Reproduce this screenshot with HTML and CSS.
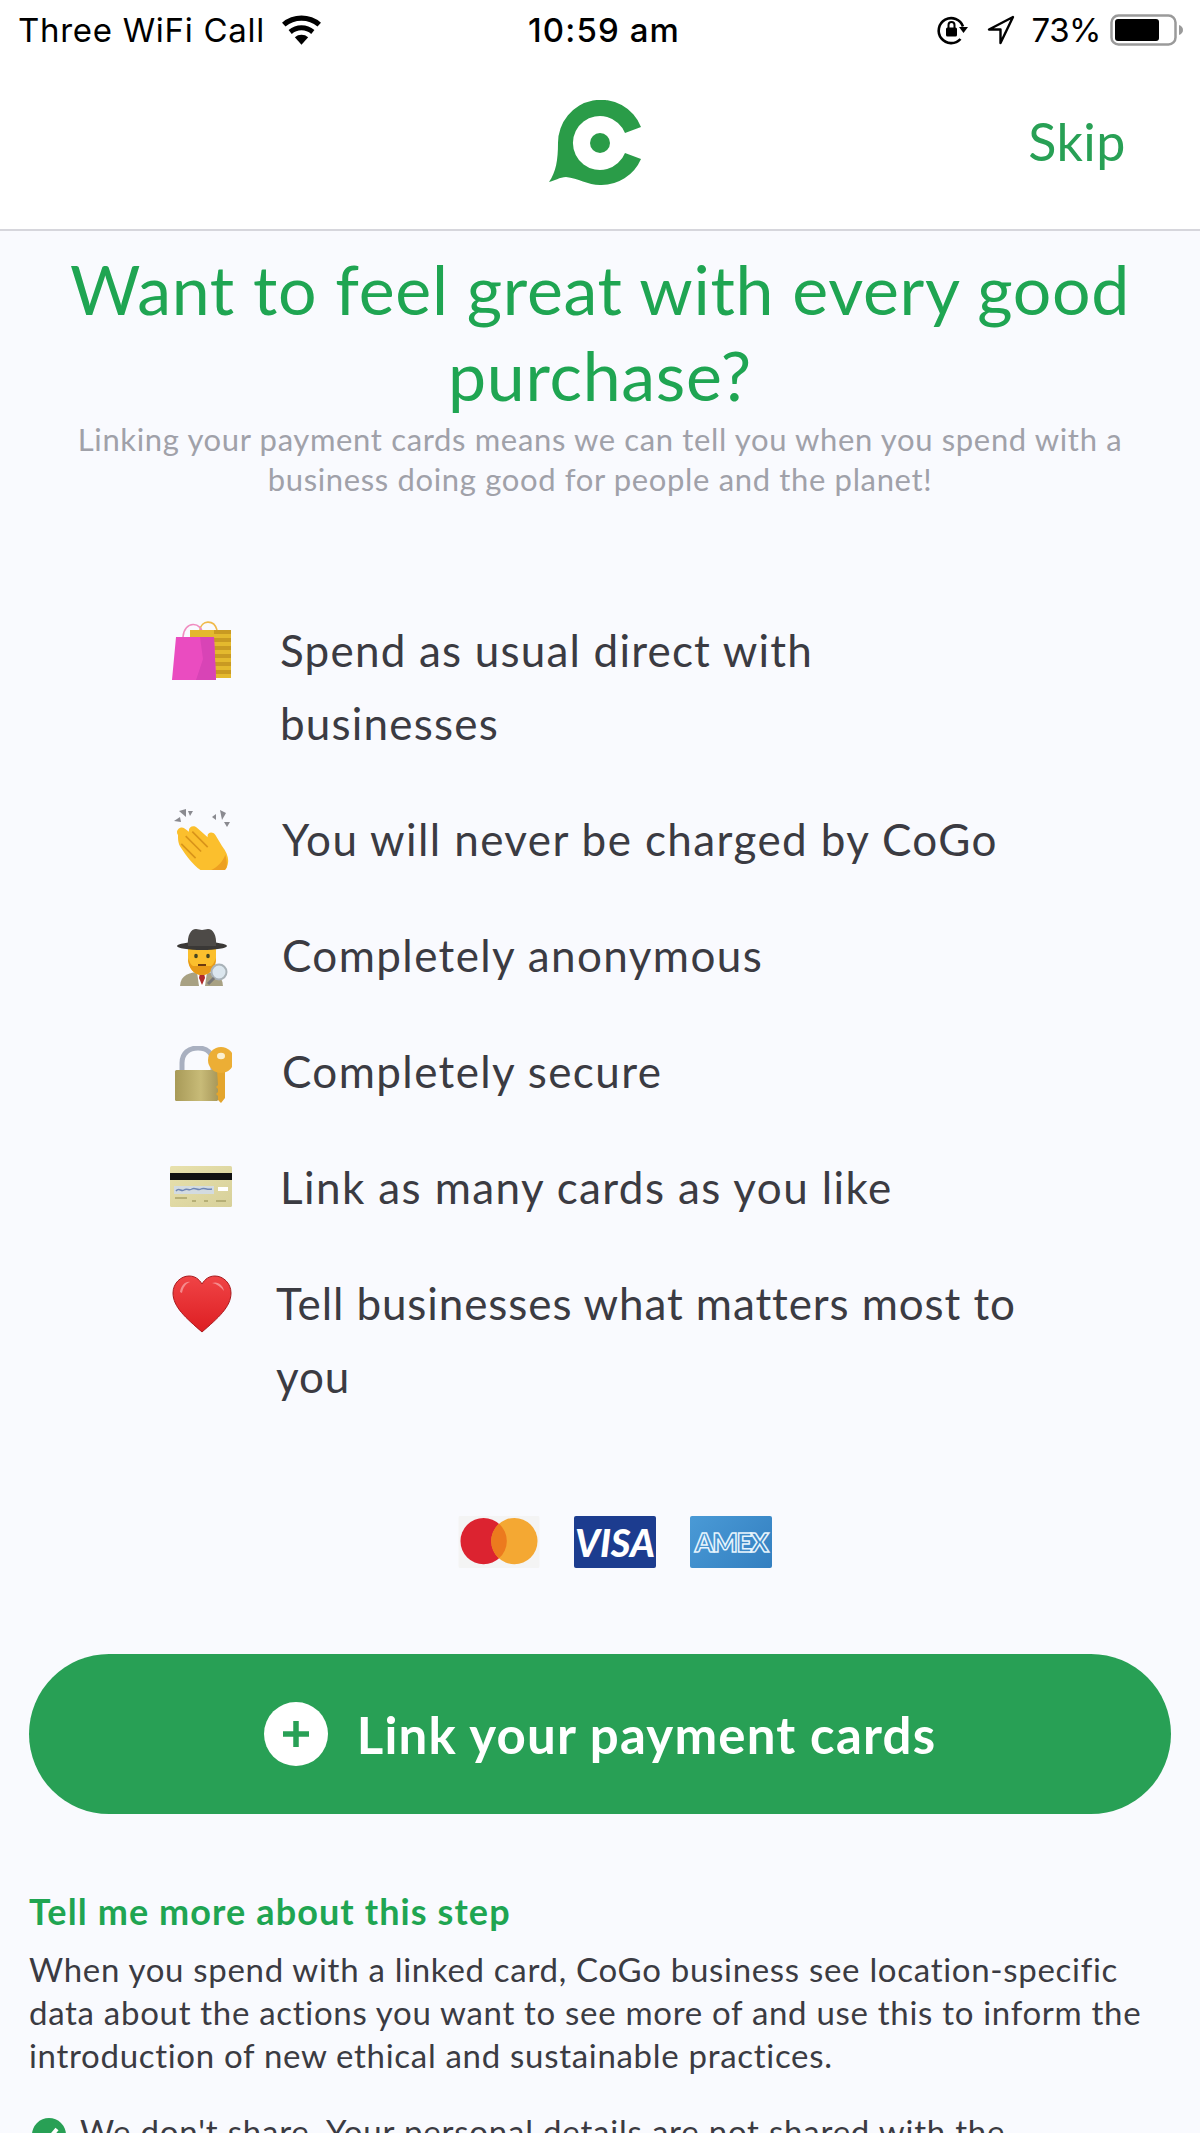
FILE: index.html
```html
<!DOCTYPE html>
<html lang="en">
<head>
<meta charset="utf-8">
<title>CoGo</title>
<link rel="stylesheet" href="styles.css">
</head>
<body>
<div class="page">
  <header class="top">
    <div class="status">
      <div class="status-left">
        <span>Three WiFi Call</span>
        <svg class="wifi" viewBox="0 0 40 30"><path d="M20 29 13.500 21.500a10 10 0 0 1 13 0Z"/><path d="M10.500 18.300 7.400 14.600a19.500 19.500 0 0 1 25.200 0l-3.100 3.700a14.600 14.600 0 0 0-19 0Z"/><path d="M4.400 11.200 1 7.400a29 29 0 0 1 38 0l-3.400 3.800a24 24 0 0 0-31.200 0Z"/></svg>
      </div>
      <div class="status-time">10:59 am</div>
      <div class="status-right">
        <svg class="rot" viewBox="0 0 32 32"><path d="M27 12.500A12.500 12.500 0 1 0 24.500 25" fill="none" stroke="#000" stroke-width="2.600"/><path d="M23 13h9l-4.500 6Z"/><rect x="10" y="13.500" width="11" height="9" rx="1.500"/><path d="M12.500 14v-3a3 3 0 0 1 6 0v3" fill="none" stroke="#000" stroke-width="2"/></svg>
        <svg class="loc" viewBox="0 0 28 30"><path d="M26 2 2 14.500h11.500V28Z" fill="none" stroke="#000" stroke-width="2.400" stroke-linejoin="round"/></svg>
        <span class="pct">73%</span>
        <svg class="batt" viewBox="0 0 74 32"><rect x="1.500" y="1.500" width="64" height="29" rx="7" fill="none" stroke="#9a9a9a" stroke-width="2.500"/><rect x="5" y="5" width="44" height="22" rx="3"/><path d="M69 11c2.500.8 4 2.700 4 5s-1.500 4.200-4 5Z" fill="#9a9a9a"/></svg>
      </div>
    </div>
    <div class="nav">
      <svg class="logo" viewBox="0 0 94 86"><path fill="#2a9c48" d="M1 82C8 72 10 60 10 43A43 43 0 0 1 93 27L77 33A27 27 0 1 0 77 53L93 59A43 43 0 0 1 52 85C40 85 30 78 18 77 12 77 6 81 1 82Z"/><circle cx="52" cy="43" r="10" fill="#2a9c48"/></svg>
      <span class="skip">Skip</span>
    </div>
  </header>

  <main class="content">
    <h1 class="title">Want to feel great with every good purchase?</h1>
    <p class="lead">Linking your payment cards means we can tell you when you spend with a business doing good for people and the planet!</p>

    <ul class="perks">
      <li class="perk">
        <svg class="emoji" viewBox="0 0 60 60"><path d="M28 9C29-1 42-2 45 9" fill="none" stroke="#f0b94a" stroke-width="1.600"/><path d="M11 16C12 0 30-1 31 15" fill="none" stroke="#f08cc0" stroke-width="1.600"/><rect x="18" y="9" width="41" height="48" fill="#e4b92e"/><path d="M42 9h17v4H42zm0 8h17v4H42zm0 8h17v4H42zm0 8h17v4H42zm0 8h17v4H42zm0 8h17v4H42z" fill="#c99a22"/><path d="M4 16H42L44 59H0Z" fill="#ea4cc0"/><path d="M28 16H42L44 59H24L31 38Z" fill="#d844b6"/></svg>
        <span class="perk-text">Spend as usual direct with businesses</span>
      </li>
      <li class="perk perk-b">
        <svg class="emoji emoji-clap" viewBox="0 0 60 62"><g fill="#8a8a90"><path d="M2 13 8 9 9 14Z"/><path d="M7 3 14 1 14 9Z"/><path d="M16 3 21 3 18 8Z"/><path d="M40 9 44 6 44 12Z"/><path d="M48 2 54 5 50 12Z"/><path d="M52 14 58 14 55 19Z"/></g><g transform="translate(-5 5) scale(1.100)"><path d="M10 20C7 16 12 11 16 14L20 17C19 13 24 10 28 14L37 22C36 18 41 16 44 20L50 30C56 38 57 44 54 50 49 58 41 58 34 54 26 50 18 40 13 32 10 28 10 24 10 20Z" fill="#fbbf2d"/><path d="M17 21 31 35M23 17 37 31M13 28 26 41" stroke="#d9941a" stroke-width="1.500" fill="none"/><path d="M34 54C42 58 50 56 54 50 55 46 54 42 53 38 50 46 43 52 34 54Z" fill="#eda021"/></g></svg>
        <span class="perk-text">You will never be charged by CoGo</span>
      </li>
      <li class="perk perk-b">
        <svg class="emoji" viewBox="0 0 60 60"><path d="M8 61C8 49 17 46 30 46s21 3 21 15Z" fill="#a8a183"/><path d="M25 46h10l-2 14h-6Z" fill="#fff"/><path d="M28 47h4l1 5-3 7-3-7Z" fill="#b02a2a"/><path d="M16 22h28v10c0 10-6 17-14 17S16 42 16 32Z" fill="#fbbf2d"/><path d="M16 32c2 4 2 6 5 8h18c3-2 3-4 5-8 0 10-6 17-14 17S16 42 16 32Z" fill="#e79a18"/><ellipse cx="24" cy="30" rx="1.800" ry="2.200" fill="#442"/><ellipse cx="36" cy="30" rx="1.800" ry="2.200" fill="#442"/><path d="M26 39h8" stroke="#6b3a10" stroke-width="2"/><ellipse cx="30" cy="20" rx="25" ry="4" fill="#3a3836"/><path d="M16 20C15 9 19 3 24 3c2 0 4 1 6 1s4-1 6-1c5 0 9 6 8 17Z" fill="#4d4a47"/><circle cx="47" cy="46" r="7.500" fill="#dbe6ee" stroke="#a9b2b8" stroke-width="2"/><path d="M42 52 36 58" stroke="#777" stroke-width="3"/></svg>
        <span class="perk-text">Completely anonymous</span>
      </li>
      <li class="perk perk-b">
        <svg class="emoji emoji-lock" viewBox="-3 0 60 60"><defs><linearGradient id="metal" x1="0" x2="1" y1="0" y2="0"><stop offset="0" stop-color="#a89a58"/><stop offset=".6" stop-color="#c8bb78"/><stop offset="1" stop-color="#a8985a"/></linearGradient></defs><path d="M7 26V17C7 7 14 2 23 2s15 5 15 15v9" fill="none" stroke="#a9b0c0" stroke-width="5"/><rect x="0" y="24" width="43" height="31" rx="1.500" fill="url(#metal)"/><path d="M42 24h8v28l-4 5-3-3v-4l-2-2 2-2v-3l-2-2 2-2Z" fill="#e4a52d"/><circle cx="46" cy="14" r="13" fill="#ecae35"/><ellipse cx="46" cy="10" rx="4" ry="3.200" fill="#fbf0cf"/></svg>
        <span class="perk-text">Completely secure</span>
      </li>
      <li class="perk perk-b">
        <svg class="emoji emoji-wide" viewBox="0 0 62 41"><defs><linearGradient id="cardbg" x1="0" x2="1" y1="0" y2="1"><stop offset="0" stop-color="#e8e1ad"/><stop offset="1" stop-color="#d7d09a"/></linearGradient></defs><rect width="62" height="41" rx="1.500" fill="url(#cardbg)"/><rect y="7" width="62" height="7" fill="#111"/><rect x="4" y="20" width="40" height="8" fill="#d3dbe0"/><path d="M6 25c3-4 5 1 8-1s5 1 8-1 6 2 9 0 5 1 11 0" stroke="#6f86b5" stroke-width="1.500" fill="none"/><rect x="48" y="21" width="10" height="4" fill="#fff"/><path d="M5 32h12M22 35h4M34 35h4M46 35h10" stroke="#a9a26a" stroke-width="1.500"/></svg>
        <span class="perk-text">Link as many cards as you like</span>
      </li>
      <li class="perk perk-c">
        <svg class="emoji" viewBox="0 0 60 58"><defs><linearGradient id="heart" x1="0" x2="0" y1="0" y2="1"><stop offset="0" stop-color="#f04446"/><stop offset="1" stop-color="#dd1e22"/></linearGradient></defs><path d="M30 57C14 43 1 32 1 18 1 8 9 1 17 1c6 0 10 3 13 8 3-5 7-8 13-8 8 0 16 7 16 17 0 14-13 25-29 39Z" fill="url(#heart)" stroke="#a81a1e" stroke-width="1"/><path d="M8 17C9 10 14 6 18 7c-5 2-7 6-8 11ZM40 8c6-2 11 2 12 8-3-4-7-7-12-8Z" fill="#f58a8c"/></svg>
        <span class="perk-text">Tell businesses what matters most to you</span>
      </li>
    </ul>

    <div class="cards">
      <svg class="card card-mc" viewBox="0 0 84 54"><rect width="84" height="54" fill="#f4f4f4"/><circle cx="26" cy="26" r="24" fill="#dc2330"/><circle cx="58" cy="26" r="24" fill="#f4a833"/><path d="M42 8a24 24 0 0 1 0 36 24 24 0 0 1 0-36Z" fill="#ec7a1e"/></svg>
      <div class="card card-visa">VISA</div>
      <div class="card card-amex">AMEX</div>
    </div>

    <button class="cta" type="button">
      <svg class="cta-plus" viewBox="0 0 64 64"><circle cx="32" cy="32" r="32" fill="#fff"/><path d="M32 19v26M19 32h26" stroke="#28a055" stroke-width="5.500"/></svg>
      <span>Link your payment cards</span>
    </button>

    <h2 class="more">Tell me more about this step</h2>
    <p class="body-text">When you spend with a linked card, CoGo business see location-specific data about the actions you want to see more of and use this to inform the introduction of new ethical and sustainable practices.</p>
    <div class="note">
      <svg class="check" viewBox="0 0 34 34"><circle cx="17" cy="17" r="17" fill="#28a055"/><path d="M9 17l6 6 10-12" fill="none" stroke="#fff" stroke-width="4"/></svg>
      <span>We don't share. Your personal details are not shared with the</span>
    </div>
  </main>
</div>
</body>
</html>
```

FILE: styles.css
```css
* { box-sizing: border-box; }
html, body { margin: 0; padding: 0; height: 2133px; overflow: hidden; }
body { background: #f9fafe; font-family: "Lato", "Liberation Sans", sans-serif; color: #3b3b42; }
.page { width: 1200px; height: 2133px; overflow: hidden; }

.top { height: 231px; background: #fff; border-bottom: 2px solid #d6d6dc; }
.status { height: 60px; padding: 0 16px 0 18px; display: grid; grid-template-columns: 1fr auto 1fr; align-items: center; font-family: "Inter", "Liberation Sans", sans-serif; font-size: 33px; color: #000; }
.status-left { display: flex; align-items: center; gap: 16px; letter-spacing: 0.7px; }
.status-time { font-weight: 500; font-size: 33px; letter-spacing: 1.1px; padding-left: 6px; }
.status-right { display: flex; align-items: center; justify-content: flex-end; }
.wifi { width: 41px; height: 31px; }
.rot { width: 32px; height: 32px; margin-right: 19px; }
.loc { width: 28px; height: 30px; margin-right: 17px; }
.pct { margin-right: 9px; letter-spacing: -0.5px; }
.batt { width: 74px; height: 32px; }

.nav { height: 169px; display: grid; grid-template-columns: 1fr auto 1fr; align-items: center; }
.logo { grid-column: 2; width: 94px; height: 86px; margin: -4px 10px 0 0; }
.skip { justify-self: end; padding: 0 74px 7px 0; font-size: 52px; line-height: 60px; letter-spacing: 0.5px; color: #28a055; }

.content { padding: 0 29px; }
.title { margin: 15px 0 0; font-size: 68px; line-height: 86px; font-weight: 400; letter-spacing: 0.7px; color: #1fa552; text-align: center; padding: 0 30px; }
.lead { margin: 1px 0 0; padding: 0 40px; height: 80px; font-size: 31px; line-height: 40px; letter-spacing: 0.65px; color: #a0a1a9; text-align: center; }

.perks { list-style: none; margin: 0; padding: 0 0 0 143px; }
.perk { display: flex; align-items: flex-start; gap: 48px; font-size: 44px; line-height: 73px; letter-spacing: 1.2px; }
.perk:first-child { margin-top: 115px; }
.perk-b { margin-top: 43px; gap: 50px; letter-spacing: 1.4px; }
.perk-c { margin-top: 43px; gap: 44px; letter-spacing: 0.9px; }
.perk-text { width: 750px; }
.perk-c .perk-text { width: 790px; }
.emoji { width: 60px; height: 60px; flex: none; margin-top: 7px; }
.emoji-clap { height: 62px; margin-top: 5px; }
.emoji-lock { margin-top: 11px; }
.emoji-wide { width: 62px; height: 41px; margin: 15px -2px 0 -2px; }

.cards { display: flex; justify-content: center; gap: 34px; margin-top: 103px; padding-left: 30px; }
.card { width: 82px; height: 52px; border-radius: 2px; }
.card-visa { background: #1c3c8f; color: #fff; font-weight: 900; font-style: italic; font-size: 38px; line-height: 52px; text-align: center; }
.card-amex { background: linear-gradient(135deg, #4a9ad6, #337fc0); color: transparent; -webkit-text-stroke: 1.5px #e6f4fd; font-weight: 900; font-size: 27px; line-height: 52px; letter-spacing: -1.5px; text-align: center; }

.cta { display: flex; align-items: center; justify-content: center; gap: 29px; width: 1142px; height: 160px; margin: 86px 0 0; padding: 0; border: 0; border-radius: 80px; background: #28a055; color: #fff; font-family: inherit; font-size: 51px; letter-spacing: 1.2px; font-weight: 700; }
.cta-plus { width: 64px; height: 64px; }

.more { margin: 75px 0 0; font-size: 36px; line-height: 44px; letter-spacing: 1.1px; font-weight: 700; color: #1fa552; }
.body-text { margin: 15px 0 0; font-size: 33px; line-height: 43px; letter-spacing: 0.7px; color: #3b3b42; }
.note { display: flex; gap: 14px; margin-top: 33px; font-size: 33px; line-height: 43px; letter-spacing: 0.8px; align-items: flex-start; }
.check { width: 34px; height: 34px; margin: 8px 0 0 3px; flex: none; }
```
